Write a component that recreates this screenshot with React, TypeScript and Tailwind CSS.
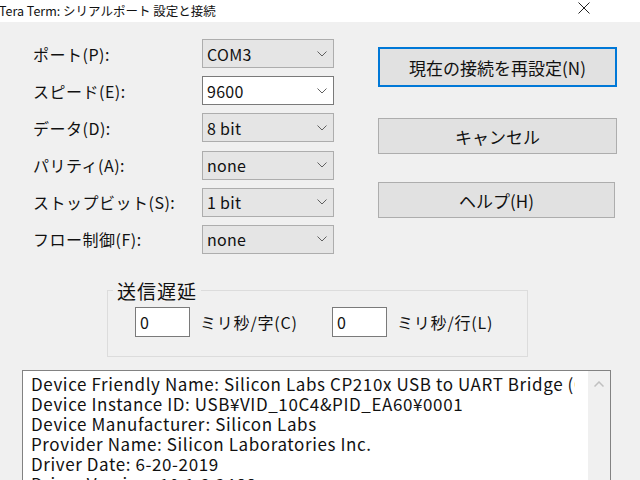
import React from "react";

const jp = { fontFamily: '"Noto Sans CJK JP", "Noto Sans", sans-serif' };

const Chevron = () => (
  <svg width="10" height="6" viewBox="0 0 10 6" className="shrink-0">
    <polyline points="0.5,0.5 5,5 9.5,0.5" fill="none" stroke="#606060" strokeWidth="1" />
  </svg>
);

interface ComboProps {
  value: string;
  editable?: boolean;
}

const Combo = ({ value, editable }: ComboProps) => (
  <div
    className={`flex items-center justify-between h-[29px] w-[132px] pl-[4px] pr-[6px] border ${
      editable ? "bg-white border-[#7a7a7a]" : "bg-[#e5e5e5] border-[#adadad]"
    }`}
  >
    <span className="text-[16px] leading-none tracking-[0.3px]">{value}</span>
    <Chevron />
  </div>
);

const rows: [string, string, boolean?][] = [
  ["ポート(P):", "COM3"],
  ["スピード(E):", "9600", true],
  ["データ(D):", "8 bit"],
  ["パリティ(A):", "none"],
  ["ストップビット(S):", "1 bit"],
  ["フロー制御(F):", "none"],
];

const info = [
  "Device Friendly Name: Silicon Labs CP210x USB to UART Bridge (COM3)",
  "Device Instance ID: USB¥VID_10C4&PID_EA60¥0001",
  "Device Manufacturer: Silicon Labs",
  "Provider Name: Silicon Laboratories Inc.",
  "Driver Date: 6-20-2019",
  "Driver Version: 10.1.8.2466",
];

const App = () => {
  return (
    <div className="w-[640px] h-[480px] overflow-hidden bg-[#f0f0f0] text-[#111]" style={jp}>
      <div className="relative h-[22px] bg-white flex items-center">
        <span className="ml-[-1px] text-[12.5px] leading-none whitespace-nowrap">
          Tera Term: シリアルポート 設定と接続
        </span>
        <svg width="12" height="12" viewBox="0 0 12 12" className="absolute left-[578px] top-[2px]">
          <path d="M0.5 0.5 L11.5 11.5 M11.5 0.5 L0.5 11.5" stroke="#222" strokeWidth="1" />
        </svg>
      </div>

      <div className="flex pt-[17px]">
        <div className="grid grid-cols-[169px_132px] gap-y-[8.2px] pl-[33px]">
          {rows.map(([label, value, editable]) => (
            <React.Fragment key={label}>
              <div className="flex items-center h-[29px] text-[16px] tracking-[0.5px] whitespace-nowrap">
                {label}
              </div>
              <Combo value={value} editable={editable} />
            </React.Fragment>
          ))}
        </div>

        <div className="flex flex-col ml-[44px] pt-[8px] w-[239px]">
          <button className="h-[40px] border-2 border-[#0078d7] bg-[#e1e1e1] text-[17px] leading-none">
            現在の接続を再設定(N)
          </button>
          <button className="mt-[31px] h-[36px] border border-[#adadad] bg-[#e1e1e1] text-[17px] leading-none">
            キャンセル
          </button>
          <button className="mt-[28px] h-[36px] w-[237px] border border-[#adadad] bg-[#e1e1e1] text-[17px] leading-none">
            ヘルプ(H)
          </button>
        </div>
      </div>

      <fieldset className="ml-[107px] mt-[27px] w-[421px] h-[76px] border border-[#dcdcdc]">
        <legend className="ml-[5px] px-[4px] text-[19px] leading-[19px] tracking-[1px]">送信遅延</legend>
        <div className="flex items-center text-[16px] tracking-[0.8px] pl-[27px] pt-[7px]">
          <div className="w-[55px] h-[30px] bg-white border border-[#7a7a7a] pl-[4px] flex items-center">0</div>
          <span className="ml-[10px] w-[132px] whitespace-nowrap">ミリ秒/字(C)</span>
          <div className="w-[55px] h-[30px] bg-white border border-[#7a7a7a] pl-[4px] flex items-center">0</div>
          <span className="ml-[10px] whitespace-nowrap">ミリ秒/行(L)</span>
        </div>
      </fieldset>

      <div className="ml-[22px] mt-[13px] w-[589px] h-[130px] flex border border-[#828282] bg-white">
        <div className="flex-1 overflow-hidden pl-[8px] pt-[3px] mr-[12px]">
          {info.map((line) => (
            <div key={line} className="text-[17px] leading-[20px] tracking-[0.6px] whitespace-nowrap">
              {line}
            </div>
          ))}
        </div>
        <div className="w-[23px] bg-[#f0f0f0] border-l border-white flex justify-center pt-[10px]">
          <svg width="10" height="6" viewBox="0 0 10 6">
            <polyline points="0.5,5.5 5,1 9.5,5.5" fill="none" stroke="#c0c0c0" strokeWidth="1.5" />
          </svg>
        </div>
      </div>
    </div>
  );
};

export default App;
